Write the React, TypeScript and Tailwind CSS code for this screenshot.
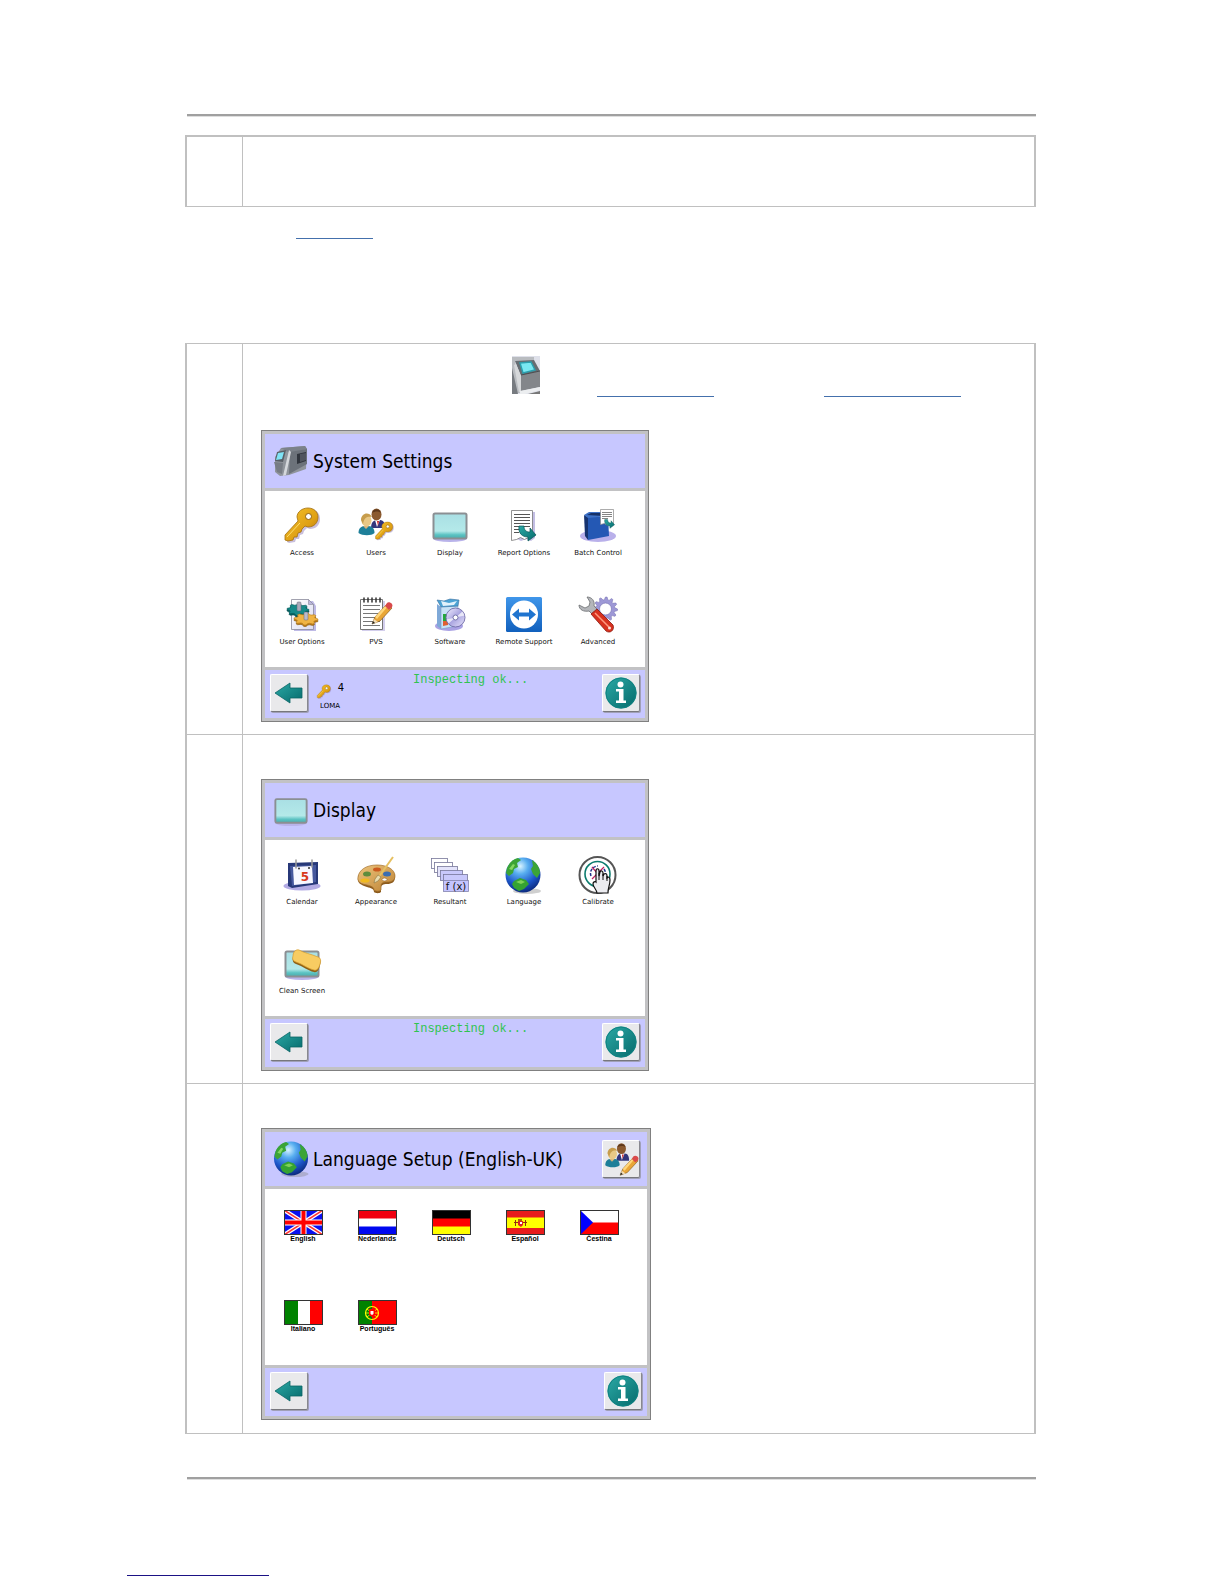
import React from "react";

const TEAL = "#0f8383";

function Svg({ label, children, className = "size-10", box = "0 0 40 40" }: { label?: string; children: React.ReactNode; className?: string; box?: string }) {
  return (
    <svg viewBox={box} className={className} role={label ? "img" : undefined} aria-label={label} aria-hidden={label ? undefined : true}>
      {children}
    </svg>
  );
}

function Defs() {
  return (
    <svg className="absolute size-0" aria-hidden="true">
      <defs>
        <linearGradient id="gold" x1="0" y1="0" x2="1" y2="1">
          <stop offset="0" stopColor="#f6c52e" />
          <stop offset="0.6" stopColor="#dfa014" />
          <stop offset="1" stopColor="#a86e0c" />
        </linearGradient>
        <linearGradient id="glass" x1="0" y1="0" x2="0" y2="1">
          <stop offset="0" stopColor="#a9dfe4" />
          <stop offset="0.7" stopColor="#b4e9e9" />
          <stop offset="0.85" stopColor="#5cc3c3" />
          <stop offset="1" stopColor="#49abab" />
        </linearGradient>
        <linearGradient id="teal" x1="0" y1="0" x2="1" y2="1">
          <stop offset="0" stopColor="#2ba9a5" />
          <stop offset="1" stopColor="#066a6c" />
        </linearGradient>
        <linearGradient id="blue" x1="0" y1="0" x2="0" y2="1">
          <stop offset="0" stopColor="#3f96ea" />
          <stop offset="1" stopColor="#1160bd" />
        </linearGradient>
        <radialGradient id="sea" cx="0.42" cy="0.25" r="0.75">
          <stop offset="0" stopColor="#d8f3ff" />
          <stop offset="0.3" stopColor="#58aef0" />
          <stop offset="0.7" stopColor="#1c55c8" />
          <stop offset="1" stopColor="#0c2b80" />
        </radialGradient>
        <linearGradient id="disc" x1="0" y1="0" x2="1" y2="1">
          <stop offset="0" stopColor="#f3f1ff" />
          <stop offset="0.5" stopColor="#a9a4e0" />
          <stop offset="1" stopColor="#e9e6fb" />
        </linearGradient>
        <linearGradient id="paper" x1="0" y1="0" x2="1" y2="1">
          <stop offset="0" stopColor="#ffffff" />
          <stop offset="1" stopColor="#dcdcf0" />
        </linearGradient>
        <linearGradient id="wood" x1="0" y1="0" x2="1" y2="1">
          <stop offset="0" stopColor="#edc47c" />
          <stop offset="1" stopColor="#bd8335" />
        </linearGradient>
      </defs>
    </svg>
  );
}

const KeyShape = () => (
  <>
    <path d="M37 12c0 6-4 10-10 10l-3-1-3 3-1 3-3 1-1 4-3 0-1 3-6 1-2-1 0-5L17 16l-1-4C16 6 20 2 27 2s10 5 10 10z" fill="#9c8bc0" opacity="0.55" transform="translate(1 1)" />
    <path d="M36 11c0 6-4 10-10 10l-3-1-3 3-1 3-3 1-1 4-3 0-1 3-5 1-3-1 0-5L16 15l-1-4C15 6 20 2 26 2s10 4 10 9z" fill="url(#gold)" stroke="#a3700f" strokeWidth="0.8" />
    <path d="M5 31 18 17" stroke="#ffe070" strokeWidth="1" />
    <circle cx="26.500" cy="10.500" r="3" fill="#fff" stroke="#8e6010" strokeWidth="1" />
  </>
);

const PeopleShape = () => (
  <>
    <path d="M15 22c0-6 3-8 6-8h3c4 0 5 4 5 8z" fill="#33367c" />
    <path d="m19 14 2 7 3-7z" fill="#fff" />
    <path d="m21 15 1 5 1-5z" fill="#c22" />
    <ellipse cx="20.500" cy="8.500" rx="5" ry="6" fill="#8b5a2f" />
    <path d="M16 7c1-5 8-5 9 0-2-2-6-2-9 0z" fill="#5d381b" />
    <path d="M2.500 27c0-5 3-7 6-7h4c4 0 6 3 6 7-3 3-12 3-16 0z" fill="#1e7f99" />
    <path d="m7 20 3 3 3-3z" fill="#d7b27a" />
    <ellipse cx="10.500" cy="14.500" rx="5" ry="6" fill="#e9c886" />
    <path d="M5 14c0-7 8-9 11-3-4-1-8 0-9 7z" fill="#c79d4c" />
  </>
);

const DisplayShape = () => (
  <>
    <ellipse cx="20" cy="32.500" rx="17" ry="3.500" fill="#b9b3ea" />
    <rect x="3.500" y="7.500" width="33" height="25" rx="1.500" fill="url(#glass)" stroke="#8b8f93" strokeWidth="2" />
  </>
);

const GlobeShape = () => (
  <>
    <ellipse cx="23" cy="36" rx="14" ry="3" fill="#888" opacity="0.4" />
    <circle cx="19" cy="20" r="17.500" fill="url(#sea)" />
    <path d="M3 13C5 8 9 4 14 3l3 2-4 3 1 4-4 2-1 4-4 3-3-3z" fill="#3ba436" />
    <path d="M28 5c5 3 8 8 8 13l-3 5-4-4-2-5 2-3z" fill="#3ba436" />
    <path d="M10 26l6-3 6 2 3 4-5 5-5 2-5-3-2-4z" fill="#35a332" />
    <path d="M12 27l5-2 4 2-4 2z" fill="#7fd257" />
    <path d="M5 14l4-5 2 1-3 5z" fill="#83d762" />
  </>
);

const PencilShape = () => (
  <>
    <path d="M16 29l3-7L31 9l5 4-12 13z" fill="#e9a637" stroke="#8a5a17" strokeWidth="0.7" />
    <path d="m19 22 12-13 2 1-12 14z" fill="#ffd67a" />
    <path d="m29 11 2-3c2-2 7 1 5 4l-3 3z" fill="#d9494b" />
    <path d="m16 29 2-5 4 3z" fill="#f3ddb5" />
    <path d="m16 29 1-3 2 2z" fill="#222" />
  </>
);

const CurlArrow = ({ scale = "" }: { scale?: string }) => (
  <path transform={scale} d="M15 20c-1 7 3 11 9 11v4l8-6-6-7v4c-4 0-6-2-6-6z" fill="url(#teal)" stroke="#075555" strokeWidth="0.7" />
);

function Gear({ cx, cy, rx, ry, fill, stroke, teeth }: { cx: number; cy: number; rx: number; ry: number; fill: string; stroke: string; teeth: number }) {
  const pts: string[] = [];
  for (let i = 0; i < teeth * 4; i++) {
    const a = (i / (teeth * 4)) * Math.PI * 2;
    const k = i % 4 < 2 ? 1 : 0.78;
    pts.push(`${(cx + Math.cos(a) * rx * k).toFixed(1)},${(cy + Math.sin(a) * ry * k).toFixed(1)}`);
  }
  return <polygon points={pts.join(" ")} fill={fill} stroke={stroke} strokeWidth="0.6" />;
}

const Key = () => <Svg><KeyShape /></Svg>;
const Users = () => (
  <Svg>
    <PeopleShape />
    <g transform="translate(18 15) scale(0.52)"><KeyShape /></g>
  </Svg>
);
const Display = () => <Svg><DisplayShape /></Svg>;
const Report = () => (
  <Svg>
    <path d="M9 6h22v26l-4 3-5-2-5 2-4-2-4 1z" fill="#a9a2d8" opacity="0.7" />
    <path d="M7.500 4.500h21v26l-4 1-4 2-4-2-4 2-5 1z" fill="#fff" stroke="#777" strokeWidth="0.8" />
    <path d="M10 8.500h16M10 11.500h16M10 14.500h16M10 17.500h16M10 20.500h16M10 23.500h6M10 26.500h5" stroke="#555" strokeWidth="1" />
    <CurlArrow />
  </Svg>
);
const Batch = () => (
  <Svg>
    <ellipse cx="20" cy="30" rx="18" ry="6" fill="#b9b0ea" />
    <path d="m6 9 4 2v23l-3-4z" fill="#16336f" />
    <path d="m10 11 20-1 1 20-21 4z" fill="#2458b4" />
    <path d="m6 9 5-3h19v4l-20 2z" fill="#3c70c6" />
    <path d="m9 9 4-2h14l-2 3z" fill="#153067" />
    <path d="M22.500 3.500h13v15l-3-1-3 2-3-2-4 1z" fill="#fff" stroke="#888" strokeWidth="0.7" />
    <path d="M24 6.500h10M24 8.500h10M24 10.500h10M24 12.500h6" stroke="#666" strokeWidth="0.8" />
    <CurlArrow scale="translate(18 2) scale(0.58)" />
  </Svg>
);
const UserOptions = () => (
  <Svg>
    <path d="M12 6h19l3 5v25H12z" fill="#a39cdc" opacity="0.7" />
    <path d="M9.500 4.500h17l5 5v25h-22z" fill="url(#paper)" stroke="#8a8a9a" strokeWidth="0.8" />
    <path d="M26.500 4.500v5h5z" fill="#b9b6dc" stroke="#8a8a9a" strokeWidth="0.6" />
    <Gear cx={16} cy={16} rx={11} ry={6} fill="#08696a" stroke="#044" teeth={8} />
    <Gear cx={16} cy={14.5} rx={11} ry={6} fill="#168a89" stroke="#055" teeth={8} />
    <rect x="15" y="7" width="4" height="9" rx="1" fill="#aab" stroke="#667" strokeWidth="0.5" />
    <Gear cx={24} cy={25.5} rx={12} ry={6} fill="#b97c18" stroke="#8b5a0f" teeth={8} />
    <Gear cx={24} cy={24} rx={12} ry={6} fill="#f0b443" stroke="#b97c18" teeth={8} />
    <rect x="22" y="17" width="4" height="8" rx="1" fill="#bbc" stroke="#667" strokeWidth="0.5" />
  </Svg>
);
const Pvs = () => (
  <Svg>
    <path d="M6 6h23v30H6z" fill="#b5aee0" opacity="0.6" />
    <path d="M4.500 4.500h22v30h-22z" fill="#fff" stroke="#777" strokeWidth="1" />
    <path d="M7 10.500h17M7 14.500h17M7 18.500h17M7 22.500h17M7 26.500h17M7 30.500h17" stroke="#777" strokeWidth="1" />
    <path d="M8 3v4M12 3v4M16 3v4M20 3v4M24 3v4" stroke="#333" strokeWidth="1.500" strokeLinecap="round" />
    <PencilShape />
  </Svg>
);
const Software = () => (
  <Svg>
    <ellipse cx="19" cy="31" rx="14" ry="5" fill="#aaa2e4" />
    <path d="m7 9 4 3v22l-4-3z" fill="#7fa9d8" />
    <path d="M11 11h17l-1 20-16 3z" fill="#c7e2f6" stroke="#7c9cc4" strokeWidth="0.600" />
    <path d="m7 5 7 1 6-2 9 1-1 6-17 1z" fill="#4ba3d4" stroke="#3b6f9f" strokeWidth="0.600" />
    <path d="m11 6 8 2 8-2-3 4-11 1z" fill="#e2f2fb" />
    <path d="M13 19h4v9l-4 1z" fill="#24a83b" />
    <path d="M13 26h5v4l-5 1z" fill="#e06030" />
    <circle cx="25.500" cy="22.500" r="9.500" fill="url(#disc)" stroke="#716ca8" strokeWidth="0.900" />
    <path d="m25.500 22.500 7-6 2 4zM25.500 22.500l-7 6-2-4z" fill="#fff" opacity="0.7" />
    <circle cx="25.500" cy="22.500" r="2.500" fill="#fff" stroke="#77a" strokeWidth="1" />
  </Svg>
);
const Remote = () => (
  <Svg>
    <rect x="2" y="2" width="36" height="35" rx="1.500" fill="url(#blue)" />
    <circle cx="20" cy="19.500" r="14" fill="#fff" />
    <path d="m8 19.500 7-6v4h10v-4l7 6-7 6v-4H15v4z" fill="#1f74cf" />
  </Svg>
);
const Advanced = () => (
  <Svg>
    <Gear cx={27.500} cy={14} rx={12} ry={12} fill="#9d98d6" stroke="#7b76b6" teeth={12} />
    <circle cx="27.500" cy="14" r="6" fill="#fff" stroke="#7b76b6" strokeWidth="0.7" />
    <path d="M9 2c5 0 8 4 7 9l5 5-5 5-5-5c-5 1-10-1-10-6l6 3 4-2 1-4z" fill="#b4b6ba" stroke="#6b6d70" strokeWidth="0.800" />
    <path d="m13 19 6-5 16 16c2 5-3 9-7 6z" fill="#d8321f" stroke="#8c1a10" strokeWidth="0.800" />
    <path d="m17 18 14 14" stroke="#ff9a80" strokeWidth="1.500" />
    <circle cx="31.500" cy="33" r="1.500" fill="#fbe3dc" />
  </Svg>
);
const Calendar = () => (
  <Svg>
    <ellipse cx="20" cy="31" rx="18.500" ry="4.500" fill="#b3abe4" />
    <path d="m6 8 30-1v22l-26 4-4-2z" fill="#273878" />
    <path d="m8 11 26-1v17l-24 4z" fill="#46589e" />
    <path d="m11 12 19-1 1 17-19 2z" fill="#f7f7ff" />
    <path d="M14 5v8M30 5v7" stroke="#999" strokeWidth="1.500" strokeLinecap="round" />
    <circle cx="17" cy="13.500" r="1" fill="#333" />
    <circle cx="27" cy="13" r="1" fill="#333" />
    <text x="23" y="26" textAnchor="middle" fontSize="12" fontWeight="700" fontFamily="DejaVu Sans, sans-serif" fill="#d8391c">5</text>
  </Svg>
);
const Palette = () => (
  <Svg>
    <path d="M2 22C3 15 10 10 21 10c11 0 18 5 18 11 0 5-3 7-8 7-4 0-6 1-6 4v4c-2 2-6 1-7 0 0-3-3-4-7-5C5 29 1 27 2 22z" fill="#8c5b1d" transform="translate(0 1)" />
    <path d="M2 22C3 15 10 10 21 10c11 0 18 5 18 11 0 4-3 6-8 6-4 0-6 1-6 4v4c-2 2-6 1-7 0 0-3-3-4-7-5C5 29 1 27 2 22z" fill="url(#wood)" stroke="#a4702b" strokeWidth="0.7" />
    <ellipse cx="11" cy="19" rx="4" ry="2.500" fill="#5e8c3c" />
    <ellipse cx="21" cy="14.500" rx="4" ry="2" fill="#cc5a1e" />
    <ellipse cx="31" cy="19" rx="4" ry="2.500" fill="#3c6eb0" />
    <ellipse cx="9" cy="25.500" rx="4.500" ry="2" fill="#f0b91e" />
    <ellipse cx="28.500" cy="24.500" rx="2.500" ry="1.500" fill="#fff" stroke="#966222" strokeWidth="0.6" />
    <path d="M37 2 22 23" stroke="#e6c060" strokeWidth="2" />
    <path d="m22 20 3 2-3 4-4 2 1-4z" fill="#e9dcae" stroke="#8a7643" strokeWidth="0.6" />
  </Svg>
);
const Resultant = () => (
  <Svg>
    {[0, 1, 2, 3, 4].map((i) => (
      <rect key={i} x={1.5 + i * 3} y={3.5 + i * 4} width={16 + i * 2} height="10" fill={i < 2 ? "#fff" : i === 2 ? "#e4e4fb" : "#c8c8fb"} stroke="#77779a" strokeWidth="0.8" />
    ))}
    <rect x="13.500" y="25.500" width="25" height="11" fill="#c4c4ff" stroke="#8484ae" strokeWidth="0.800" />
    <text x="26" y="34.500" textAnchor="middle" fontSize="10" fontFamily="DejaVu Sans, sans-serif" fill="#111">f (x)</text>
  </Svg>
);
const Globe = () => <Svg><GlobeShape /></Svg>;
const Calibrate = () => (
  <Svg>
    <circle cx="19.500" cy="20" r="18" fill="#fff" stroke="#555" strokeWidth="2" />
    <circle cx="19.500" cy="19" r="12.500" fill="none" stroke="#0b7b6e" strokeWidth="1.600" />
    <path d="m14 12 11 13M26 12 14 24" stroke="#c02060" strokeWidth="1.200" />
    <path d="M13 21c-2-5 2-10 7-10M26 14c2 3 2 6 1 9" fill="none" stroke="#23348c" strokeWidth="1.500" strokeDasharray="3 1.500" />
    <path d="M18 27V16c0-3 3-3 3 0v5l1-4c1-2 3-1 3 1v3l1-2c2-1 3 0 3 2v2l1-1c2 0 2 1 2 3 0 5-2 7-2 13H19c0-3-4-6-4-9 0-2 2-3 3-2z" fill="#ececf0" stroke="#111" strokeWidth="1.200" />
    <path d="M21 18v7M25 19v6M29 21v5" stroke="#111" strokeWidth="1" />
  </Svg>
);
const CleanScreen = () => (
  <Svg>
    <DisplayShape />
    <path d="M11 12c0-4 3-7 6-6 5 3 12 4 19 7 3 1 3 4 2 7-1 5-3 8-6 7-6-1-11-6-18-8-3-1-4-4-3-7z" fill="#8e6016" transform="translate(0 1)" />
    <path d="M11 12c0-4 3-7 6-6 5 3 12 4 19 7 3 1 3 4 2 7-1 4-3 7-6 6-6-1-11-6-18-8-3-1-4-3-3-6z" fill="#f8cc62" stroke="#d79d2e" strokeWidth="0.7" />
  </Svg>
);

const Machine = () => (
  <Svg className="size-9" box="0 -2 36 36">
    <path d="M2 12 8 3l24-2 2 3-1 20-17 6-9 1-5-4z" fill="#8f949b" />
    <path d="m8 3 24-2 2 3-17 4z" fill="#7c828a" />
    <path d="m17 7 17-3v15l-18 10z" fill="#6c727a" />
    <path d="m24 9 9-2v9l-9 3z" fill="#30353d" />
    <path d="m27 9 6-1v7l-6 2z" fill="#50555e" />
    <path d="m16 5 2 2-5 23-3 1z" fill="#d5d8dc" />
    <path d="M4 7l9-2-3 12-8-1z" fill="#595f66" />
    <path d="m5 8 6-1-2 7-6 1z" fill="#7fe4f6" />
    <path d="m1 17 9 1-1 11-5-2z" fill="#777c84" />
  </Svg>
);

const Kiosk = () => (
  <svg viewBox="0 0 28 38" className="mb-[3px] h-[38px] w-7" role="img" aria-label="System settings">
    <rect width="28" height="38" fill="#dfe1ea" />
    <path d="M0 1h22v4H3l5 32H0z" fill="#b9bcc0" />
    <path d="M0 12 6 38H0z" fill="#777b80" />
    <path d="m3 5 19-1 6 11-19 5z" fill="#676d72" />
    <path d="m8 7 11-1 4 8-12 3z" fill="#79e8f2" stroke="#2c9fae" strokeWidth="1.500" />
    <path d="m9 19 19-4v16L9 35z" fill="#83868a" />
    <path d="m9 19 19-4" stroke="#4a4d50" strokeWidth="1" />
    <path d="M2 9l5 27h2V20L4 8z" fill="#d6d8da" />
    <path d="m8 35 20-4v3l-15 4H8z" fill="#eceef0" />
    <path d="m16 38 12-3v3z" fill="#777" />
  </svg>
);

function Flag({ children }: { children: React.ReactNode }) {
  return (
    <svg viewBox="0 0 39 25" className="h-[25px] w-[39px]" aria-hidden="true">
      {children}
      <rect x="0.500" y="0.500" width="38" height="24" fill="none" stroke="#333" strokeWidth="1" />
    </svg>
  );
}

const Rows = ({ a, b, c }: { a: string; b: string; c: string }) => (
  <Flag>
    <rect width="39" height="25" fill={b} />
    <rect width="39" height="8.500" fill={a} />
    <rect y="16.500" width="39" height="8.500" fill={c} />
  </Flag>
);

const UnionJack = () => (
  <Flag>
    <rect width="39" height="25" fill="#0a10f0" />
    <path d="m0 0 39 25M39 0 0 25" stroke="#fff" strokeWidth="4" />
    <path d="m0 0 39 25M39 0 0 25" stroke="#f33" strokeWidth="1.500" />
    <path d="M19.500 0v25M0 12.500h39" stroke="#fff" strokeWidth="6" />
    <path d="M19.500 0v25M0 12.500h39" stroke="#f00" strokeWidth="4" />
  </Flag>
);
const Spain = () => (
  <Flag>
    <rect width="39" height="25" fill="#e81c1c" />
    <rect y="7.500" width="39" height="10.500" fill="#ff0" />
    <path d="M9.500 10v6M19.500 10v6M8 12.500h4M17 12.500h4" stroke="#903010" strokeWidth="1" />
    <path d="M12 11h5v4l-2 2-3-2z" fill="#d22" />
    <path d="M12 9h4v2h-4z" fill="#a60" />
    <path d="M14 12h2v2h-2z" fill="#fff" />
  </Flag>
);
const Czech = () => (
  <Flag>
    <rect width="39" height="25" fill="#fff" />
    <rect y="12.500" width="39" height="12.500" fill="#f00" />
    <path d="M0 0 13 12.500 0 25z" fill="#00f" />
  </Flag>
);
const Italy = () => (
  <Flag>
    <rect width="39" height="25" fill="#fff" />
    <rect width="14" height="25" fill="#008200" />
    <rect x="26" width="13" height="25" fill="#f00" />
  </Flag>
);
const Portugal = () => (
  <Flag>
    <rect width="39" height="25" fill="#f00" />
    <rect width="14" height="25" fill="#008200" />
    <circle cx="14" cy="13" r="6.500" fill="none" stroke="#ff0" strokeWidth="1.200" />
    <path d="m9 9 10 8M19 9 9 17M8 13h12" stroke="#ff0" strokeWidth="0.800" />
    <path d="M11 9h6v6l-3 2-3-2z" fill="#f00" />
    <path d="M12.500 11h3v3l-1.500 1-1.500-1z" fill="#fff" />
  </Flag>
);

function ToolButton({ label, children }: { label: string; children: React.ReactNode }) {
  return (
    <button aria-label={label} className="flex size-[38px] shrink-0 items-center justify-center rounded-[2px] border border-t-white border-l-white border-r-[#88888f] border-b-[#77777c] bg-[#e9e9eb] shadow-[1px_1px_0_#a0a0b8]">
      {children}
    </button>
  );
}

const BackButton = () => (
  <ToolButton label="Back">
    <Svg className="size-9" box="0 0 36 36">
      <path d="M4 18 19 8v5h12v10H19v5z" fill="url(#teal)" stroke="#0a6466" strokeWidth="0.8" />
    </Svg>
  </ToolButton>
);
const InfoButton = () => (
  <ToolButton label="Information">
    <Svg className="size-9" box="0 0 36 36">
      <circle cx="18" cy="18" r="15.500" fill="url(#teal)" />
      <circle cx="18" cy="18" r="15" fill="none" stroke={TEAL} strokeWidth="1" />
      <circle cx="17.500" cy="9.500" r="3" fill="#fff" />
      <path d="M13 14h7.500v11.500H23V28H13v-2.500h3v-9h-3z" fill="#fff" />
    </Svg>
  </ToolButton>
);

type Item = { label: string; icon: React.ReactNode };

const systemItems: Item[] = [
  { label: "Access", icon: <Key /> },
  { label: "Users", icon: <Users /> },
  { label: "Display", icon: <Display /> },
  { label: "Report Options", icon: <Report /> },
  { label: "Batch Control", icon: <Batch /> },
  { label: "User Options", icon: <UserOptions /> },
  { label: "PVS", icon: <Pvs /> },
  { label: "Software", icon: <Software /> },
  { label: "Remote Support", icon: <Remote /> },
  { label: "Advanced", icon: <Advanced /> },
];
const displayItems: Item[] = [
  { label: "Calendar", icon: <Calendar /> },
  { label: "Appearance", icon: <Palette /> },
  { label: "Resultant", icon: <Resultant /> },
  { label: "Language", icon: <Globe /> },
  { label: "Calibrate", icon: <Calibrate /> },
  { label: "Clean Screen", icon: <CleanScreen /> },
];
const languages: Item[] = [
  { label: "English", icon: <UnionJack /> },
  { label: "Nederlands", icon: <Rows a="#f00010" b="#fff" c="#0008f0" /> },
  { label: "Deutsch", icon: <Rows a="#000" b="#f00" c="#ff0" /> },
  { label: "Español", icon: <Spain /> },
  { label: "Čestina", icon: <Czech /> },
  { label: "Italiano", icon: <Italy /> },
  { label: "Português", icon: <Portugal /> },
];

function Screen({ title, icon, action, status, user, wide, children }: { title: string; icon: React.ReactNode; action?: React.ReactNode; status?: string; user?: React.ReactNode; wide?: boolean; children: React.ReactNode }) {
  return (
    <section className={`flex flex-col gap-[3px] border border-[#808080] bg-[#c2c2c4] p-[3px] ${wide ? "w-[390px]" : "w-[388px]"}`}>
      <header className="flex h-[54px] items-center gap-1 bg-[#c7c7ff] pr-[7px] pl-2">
        {icon}
        <h2 className="font-['DejaVu_Sans_Condensed','DejaVu_Sans',sans-serif] text-[19px] leading-6 whitespace-nowrap text-black">{title}</h2>
        <div className="ml-auto">{action}</div>
      </header>
      <div className="min-h-44 bg-white">{children}</div>
      <footer className="flex h-12 items-start bg-[#c7c7ff] px-[5px] pt-1">
        <BackButton />
        <div className="w-[105px] pt-2 pl-2">{user}</div>
        <p className="font-['Liberation_Mono',monospace] text-[12px] leading-3 text-[#2fc44f]">{status}</p>
        <div className="ml-auto"><InfoButton /></div>
      </footer>
    </section>
  );
}

function IconGrid({ items }: { items: Item[] }) {
  return (
    <div className="grid grid-cols-[repeat(5,74px)] gap-y-9 pt-[15px]">
      {items.map((item) => (
        <button key={item.label} className="flex flex-col items-center">
          {item.icon}
          <span className="mt-px font-['DejaVu_Sans',sans-serif] text-[7px] leading-3 whitespace-nowrap text-[#111]">{item.label}</span>
        </button>
      ))}
    </div>
  );
}

function FlagGrid({ items }: { items: Item[] }) {
  return (
    <div className="grid grid-cols-[repeat(5,74px)] gap-y-[57px] pt-[21px] pl-px">
      {items.map((item) => (
        <button key={item.label} className="flex flex-col items-center">
          {item.icon}
          <span className="font-['Liberation_Sans',sans-serif] text-[7px] leading-2 font-bold whitespace-nowrap text-black">{item.label}</span>
        </button>
      ))}
    </div>
  );
}

function Rule() {
  return <hr className="ml-[2px] h-[3px] border-0 border-t-2 border-[#a0a0a0] bg-[#dedede]" />;
}

function Step({ children, last }: { children?: React.ReactNode; last?: boolean }) {
  const line = last ? "" : "border-b border-[#c0c0c0]";
  return (
    <tr>
      <td className={`w-14 border-r border-r-[#c0c0c0] ${line}`} />
      <td className={`p-0 pl-[18px] align-top ${line}`}>{children}</td>
    </tr>
  );
}

export default function App() {
  return (
    <div className="min-h-screen bg-white pb-2">
      <Defs />
      <main className="pt-[114px] pr-[188px] pl-[185px]">
        <Rule />
        <table className="mt-[18px] w-full border-separate border-spacing-0 border-2 border-b border-[#c0c0c0]">
          <tbody>
            <Step last><div className="h-[69px]" /></Step>
          </tbody>
        </table>
        <div className="h-[136px] pl-[111px]">
          <a href="#section" aria-label="Section" className="block h-8 w-[77px] border-b border-[#4470ac]" />
        </div>
        <table className="w-full border-separate border-spacing-0 border border-x-2 border-[#c0c0c0]">
          <tbody>
            <Step>
              <div className="flex h-[53px] items-end pl-[251px]">
                <Kiosk />
                <a href="#system-settings" aria-label="System settings" className="ml-[57px] h-5 w-[117px] border-b border-[#4470ac]" />
                <a href="#access-levels" aria-label="Access levels" className="ml-[110px] h-5 w-[137px] border-b border-[#4470ac]" />
              </div>
              <div className="pt-[33px] pb-3">
                <Screen
                  title="System Settings"
                  icon={<Machine />}
                  status="Inspecting ok..."
                  user={
                    <div className="flex w-7 flex-col font-['DejaVu_Sans',sans-serif] text-black">
                      <div className="flex items-start justify-between">
                        <Svg className="mt-[2px] size-4"><KeyShape /></Svg>
                        <span className="text-[10px] leading-3">4</span>
                      </div>
                      <span className="text-center text-[7px] leading-3">LOMA</span>
                    </div>
                  }
                >
                  <IconGrid items={systemItems} />
                </Screen>
              </div>
            </Step>
            <Step>
              <div className="pt-11 pb-3">
                <Screen title="Display" icon={<Svg className="size-9" box="1 0 38 38"><DisplayShape /></Svg>} status="Inspecting ok...">
                  <IconGrid items={displayItems} />
                </Screen>
              </div>
            </Step>
            <Step last>
              <div className="pt-11 pb-[13px]">
                <Screen
                  wide
                  title="Language Setup (English-UK)"
                  icon={<Svg className="size-9" box="1 2 36 37"><GlobeShape /></Svg>}
                  action={
                    <ToolButton label="Edit users">
                      <Svg className="size-9">
                        <PeopleShape />
                        <g transform="translate(3 9)"><PencilShape /></g>
                      </Svg>
                    </ToolButton>
                  }
                >
                  <FlagGrid items={languages} />
                </Screen>
              </div>
            </Step>
          </tbody>
        </table>
        <div className="mt-[43px]"><Rule /></div>
      </main>
      <div className="pl-[127px]">
        <a href="#contents" aria-label="Contents" className="mt-[76px] block h-5 w-[142px] border-b border-[#1b1285]" />
      </div>
    </div>
  );
}
